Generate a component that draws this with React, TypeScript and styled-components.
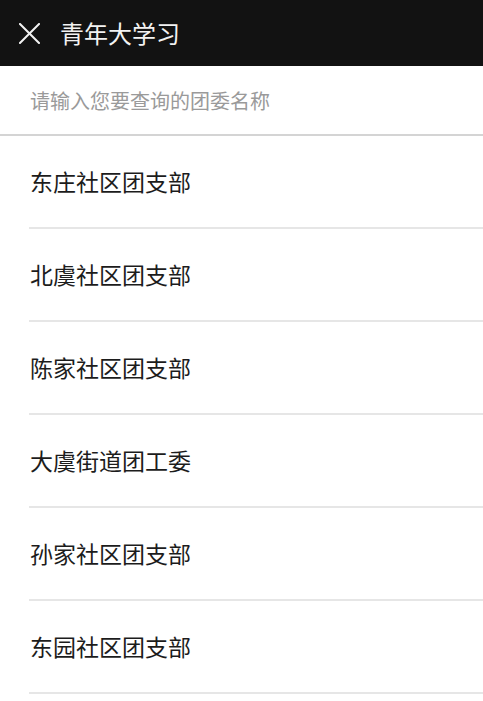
import React from "react";
import styled, { createGlobalStyle } from "styled-components";

const Global = createGlobalStyle`
  html, body { margin: 0; padding: 0; background: #fff; }
  body { font-family: "Noto Sans CJK SC", "Noto Sans", sans-serif; }
  * { box-sizing: border-box; }
`;

const Page = styled.div`
  width: 483px;
  height: 701px;
  overflow: hidden;
  background: #fff;
  display: flex;
  flex-direction: column;
`;

const TopBar = styled.header`
  height: 66px;
  flex: none;
  background: #121212;
  display: flex;
  align-items: center;
  padding-left: 18px;
  gap: 19px;
`;

const CloseButton = styled.button`
  width: 23px;
  height: 23px;
  padding: 0;
  border: 0;
  background: transparent;
  display: flex;
  align-items: center;
  justify-content: center;
  margin-top: 1px;
`;

const Title = styled.h1`
  margin: 0;
  font-size: 24px;
  font-weight: 400;
  color: #f2f2f2;
  line-height: 1;
`;

const SearchBox = styled.div`
  height: 70px;
  flex: none;
  display: flex;
  align-items: center;
  padding-left: 30px;
  border-bottom: 2px solid #d4d4d4;
`;

const SearchInput = styled.input`
  width: 100%;
  border: 0;
  outline: none;
  background: transparent;
  font-family: "Noto Sans CJK SC", sans-serif;
  font-size: 20px;
  color: #333;
  padding: 0;
  &::placeholder { color: #9a9a9a; }
`;

const List = styled.ul`
  margin: 0 0 0 29px;
  padding: 0;
  list-style: none;
`;

const Item = styled.li`
  height: 93px;
  display: flex;
  align-items: center;
  padding-left: 1px;
  padding-bottom: 2px;
  border-bottom: 2px solid #e6e6e6;
  font-size: 23px;
  color: #1c1c1c;
`;

const items = [
  "东庄社区团支部",
  "北虞社区团支部",
  "陈家社区团支部",
  "大虞街道团工委",
  "孙家社区团支部",
  "东园社区团支部",
];

export default function App() {
  return (
    <Page>
      <Global />
      <TopBar>
        <CloseButton aria-label="关闭">
          <svg width="21" height="21" viewBox="0 0 21 21">
            <path d="M1 1 L20 20 M20 1 L1 20" stroke="#f2f2f2" strokeWidth="2" strokeLinecap="square" />
          </svg>
        </CloseButton>
        <Title>青年大学习</Title>
      </TopBar>
      <SearchBox>
        <SearchInput placeholder="请输入您要查询的团委名称" />
      </SearchBox>
      <List>
        {items.map((t) => (
          <Item key={t}>{t}</Item>
        ))}
      </List>
    </Page>
  );
}
